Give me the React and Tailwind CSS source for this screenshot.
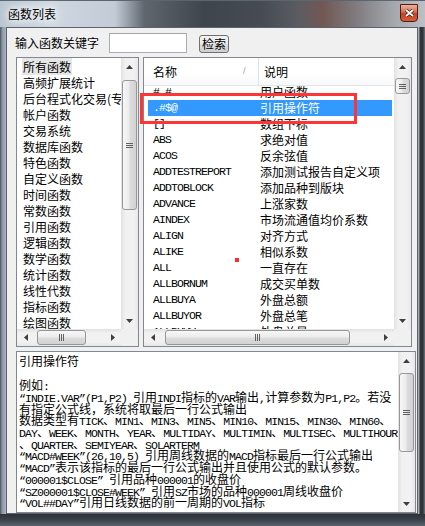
import React from "react";

const MONO = "font-['Liberation_Mono',monospace] text-[11.5px] tracking-[-0.9px]";

function Mixed({ s }) {
  const parts = s.split(/([\x20-\x7e“”]+)/).filter(Boolean);
  return parts.map((p, i) =>
    /^[\x20-\x7e“”]+$/.test(p) ? (
      <span key={i} className={MONO}>{p}</span>
    ) : (
      <span key={i}>{p}</span>
    )
  );
}

function Tri({ dir }) {
  const paths = {
    up: "M3.5 0L7 4H0Z",
    down: "M0 0H7L3.5 4Z",
    left: "M0 3.5L4 0V7Z",
    right: "M4 3.5L0 0V7Z",
  };
  const vert = dir === "up" || dir === "down";
  return (
    <svg width={vert ? 7 : 4} height={vert ? 4 : 7} viewBox={vert ? "0 0 7 4" : "0 0 4 7"}>
      <path d={paths[dir]} fill="#3f3f3f" />
    </svg>
  );
}

function VScroll({ gap, thumb, className = "" }) {
  return (
    <div className={"w-[17px] shrink-0 flex flex-col bg-[linear-gradient(90deg,#e2e2e2,#f1f1f1_25%,#f1f1f1_75%,#e8e8e8)] " + className}>
      <div className="h-[17px] shrink-0 flex items-center justify-center"><Tri dir="up" /></div>
      <div className={"shrink-0 " + gap} />
      <div className={"shrink-0 mx-[1px] rounded-[3px] border border-[#979797] bg-[linear-gradient(90deg,#f7f7f7,#ececec_45%,#dcdcdc_55%,#d2d2d2)] flex flex-col items-center justify-center gap-[1px] " + thumb}>
        <div className="w-[7px] h-[1px] bg-[#606060]" />
        <div className="w-[7px] h-[1px] bg-[#606060]" />
        <div className="w-[7px] h-[1px] bg-[#606060]" />
      </div>
      <div className="flex-1" />
      <div className="h-[17px] shrink-0 flex items-center justify-center"><Tri dir="down" /></div>
    </div>
  );
}

function HScroll({ gap, thumb }) {
  return (
    <div className="flex-1 h-[17px] flex bg-[linear-gradient(180deg,#e2e2e2,#f1f1f1_25%,#f1f1f1_75%,#e8e8e8)]">
      <div className="w-[17px] shrink-0 flex items-center justify-center"><Tri dir="left" /></div>
      <div className={"shrink-0 " + gap} />
      <div className={"shrink-0 my-[1px] rounded-[3px] border border-[#979797] bg-[linear-gradient(180deg,#f7f7f7,#ececec_45%,#dcdcdc_55%,#d2d2d2)] flex items-center justify-center gap-[1px] " + thumb}>
        <div className="h-[7px] w-[1px] bg-[#606060]" />
        <div className="h-[7px] w-[1px] bg-[#606060]" />
        <div className="h-[7px] w-[1px] bg-[#606060]" />
      </div>
      <div className="flex-1" />
      <div className="w-[17px] shrink-0 flex items-center justify-center"><Tri dir="right" /></div>
    </div>
  );
}

const leftItems = [
  "所有函数", "高频扩展统计", "后台程式化交易(专业版)", "帐户函数", "交易系统", "数据库函数",
  "特色函数", "自定义函数", "时间函数", "常数函数", "引用函数", "逻辑函数", "数学函数",
  "统计函数", "线性代数", "指标函数", "绘图函数",
];

const rightItems = [
  ["#.#", "用户函数"],
  [".#$@", "引用操作符"],
  ["[]", "数组下标"],
  ["ABS", "求绝对值"],
  ["ACOS", "反余弦值"],
  ["ADDTESTREPORT", "添加测试报告自定义项"],
  ["ADDTOBLOCK", "添加品种到版块"],
  ["ADVANCE", "上涨家数"],
  ["AINDEX", "市场流通值均价系数"],
  ["ALIGN", "对齐方式"],
  ["ALIKE", "相似系数"],
  ["ALL", "一直存在"],
  ["ALLBORNUM", "成交买单数"],
  ["ALLBUYA", "外盘总额"],
  ["ALLBUYOR", "外盘总笔"],
  ["ALLBUYV", "外盘总量"],
];

const descLines = [
  "“INDIE.VAR”(P1,P2) 引用INDI指标的VAR输出,计算参数为P1,P2。若没",
  "有指定公式线，系统将取最后一行公式输出",
  "数据类型有TICK、MIN1、MIN3、MIN5、MIN10、MIN15、MIN30、MIN60、",
  "DAY、WEEK、MONTH、YEAR、MULTIDAY、MULTIMIN、MULTISEC、MULTIHOUR",
  "、QUARTER、SEMIYEAR、SOLARTERM",
  "“MACD#WEEK”(26,10,5) 引用周线数据的MACD指标最后一行公式输出",
  "“MACD”表示该指标的最后一行公式输出并且使用公式的默认参数。",
  "“000001$CLOSE” 引用品种000001的收盘价",
  "“SZ000001$CLOSE#WEEK” 引用SZ市场的品种000001周线收盘价",
  "“VOL##DAY”引用日线数据的前一周期的VOL指标",
];

export default function App() {
  return (
    <div className="relative w-[425px] h-[526px] overflow-hidden flex flex-col bg-[#8a96a4] font-['Noto_Sans_CJK_SC',sans-serif] text-[12px] text-black">
      {/* Title bar */}
      <div className="h-[27px] shrink-0 flex items-center justify-between border-t border-[#5c6670] bg-[linear-gradient(90deg,#b9c5d1_0%,#cfd8e1_12%,#c3ccd6_27%,#5f666e_34%,#3f454d_48%,#474c54_62%,#5a5c62_70%,#735754_76%,#807c80_84%,#a6aaae_93%,#bcc0c4_100%)]">
        <div className="pl-[8px] leading-[14px] [text-shadow:0_0_6px_#fff,0_0_10px_#fff,0_0_14px_#fff]">函数列表</div>
        <div className="mr-[7px] mb-[3px] w-[18px] h-[18px] rounded-b-[4px] border border-[#4a2018] bg-[linear-gradient(180deg,#eeb2a0,#d9694c_45%,#c4401f_55%,#d6603a)] flex items-center justify-center">
          <svg width="9" height="8" viewBox="0 0 9 8">
            <path d="M1 1L8 7M8 1L1 7" stroke="#3a1a12" strokeWidth="3.2" />
            <path d="M1 1L8 7M8 1L1 7" stroke="#fff" strokeWidth="1.8" />
          </svg>
        </div>
      </div>

      <div className="flex flex-1 min-h-0">
        {/* left frame */}
        <div className="w-[6px] shrink-0 bg-[linear-gradient(90deg,#4e5862,#8c98a6_40%,#a9b5c2)]" />
        {/* client */}
        <div className="w-[412px] shrink-0 border border-[#5a6470] bg-[#f0f0f0] flex flex-col pl-[9px]">
          {/* search row */}
          <div className="flex items-center mt-[5px] h-[20px]">
            <span className="leading-[14px] -ml-[1px]">输入函数关键字</span>
            <div className="ml-[10px] w-[78px] h-[20px] bg-white border border-[#abadb3] border-t-[#a6a6a6]" />
            <button className="ml-[12px] mt-[1px] w-[30px] h-[18px] rounded-[3px] border border-[#707070] bg-[linear-gradient(180deg,#f2f2f2,#ebebeb_50%,#dddddd_51%,#cfcfcf)] text-[12px] leading-[14px] flex items-center justify-center">
              检索
            </button>
          </div>

          {/* lists */}
          <div className="flex mt-[4px] gap-[4px] h-[290px]">
            {/* left list */}
            <div className="w-[123px] h-[290px] border border-[#828790] bg-white flex flex-col">
              <div className="flex flex-1 min-h-0">
                <div className="flex-1 min-w-0 overflow-hidden pt-[1px]">
                  {leftItems.map((t, i) => (
                    <div key={i} className="h-[16px] leading-[16px] pl-[5px] whitespace-nowrap">
                      <span className={i === 0 ? "bg-[#e6e6e6] px-[1px]" : "px-[1px]"}>{t}</span>
                    </div>
                  ))}
                </div>
                <VScroll gap="h-[5px]" thumb="h-[130px]" />
              </div>
              <div className="flex h-[17px] shrink-0">
                <HScroll gap="h-[1px] w-[3px]" thumb="w-[49px]" />
                <div className="w-[17px] bg-[#f0f0f0]" />
              </div>
            </div>

            {/* right list */}
            <div className="w-[269px] h-[290px] border border-[#828790] bg-white flex flex-col">
              <div className="flex flex-1 min-h-0">
                <div className="flex-1 min-w-0 flex flex-col">
                  <div className="h-[28px] shrink-0 flex border-b border-[#e5e5e5] bg-[linear-gradient(180deg,#ffffff,#ffffff_60%,#f7f8fa)]">
                    <div className="w-[115px] shrink-0 flex items-center pl-[9px] border-r border-[#dfe3e8] relative">
                      <span className="leading-[14px]">名称</span>
                      <span className="absolute left-[99px] top-[9px] text-[9px] leading-[9px] text-[#a0a0a0] font-['Liberation_Sans',sans-serif]">/</span>
                    </div>
                    <div className="flex-1 flex items-center pl-[5px]">
                      <span className="leading-[14px]">说明</span>
                    </div>
                  </div>
                  <div className="flex-1 min-h-0 overflow-hidden">
                    <div className="-mt-[2px]">
                      {rightItems.map(([a, b], i) => (
                        <div
                          key={i}
                          className={
                            "h-[16px] ml-[4px] mr-[2px] flex items-center whitespace-nowrap " +
                            (i === 1 ? "bg-[#3399ff] text-white" : "")
                          }
                        >
                          <span className={"w-[112px] shrink-0 pl-[5px] " + MONO}>{a}</span>
                          <span className="leading-[14px]">{b}</span>
                        </div>
                      ))}
                    </div>
                  </div>
                </div>
                <VScroll gap="h-[3px]" thumb="h-[16px]" />
              </div>
              <div className="flex h-[17px] shrink-0">
                <HScroll gap="h-[1px] w-[4px]" thumb="w-[185px]" />
                <div className="w-[17px] bg-[#f0f0f0]" />
              </div>
            </div>
          </div>

          {/* description */}
          <div className="mt-[4px] w-[400px] h-[162px] border border-[#828790] bg-white flex">
            <div className="flex-1 min-w-0 overflow-hidden pl-[2px] pt-[3px] whitespace-nowrap">
              <div className="leading-[12px] h-[12px]">引用操作符</div>
              <div className="leading-[12px] h-[12px] mt-[12px]">例如<span className={MONO}>:</span></div>
              {descLines.map((l, i) => (
                <div key={i} className="leading-[11.7px] h-[11.7px]">
                  <Mixed s={l} />
                </div>
              ))}
            </div>
            <VScroll gap="h-[4px]" thumb="h-[79px]" />
          </div>
        </div>
        {/* right frame */}
        <div className="flex-1 bg-[linear-gradient(90deg,#c8ccd0,#2e3338_35%,#30363c_70%,#6d757e)]" />
      </div>
      {/* bottom frame */}
      <div className="h-[12px] shrink-0 bg-[linear-gradient(180deg,#2c3238,#3b424a_50%,#5a646e)]" />

      {/* annotation overlays */}
      <div className="absolute left-[140px] top-[93px] w-[217px] h-[31px] border-[3px] border-[#ff3535]" />
      <div className="absolute left-[235px] top-[258px] w-[4px] h-[4px] bg-[#ff2a2a]" />
    </div>
  );
}
